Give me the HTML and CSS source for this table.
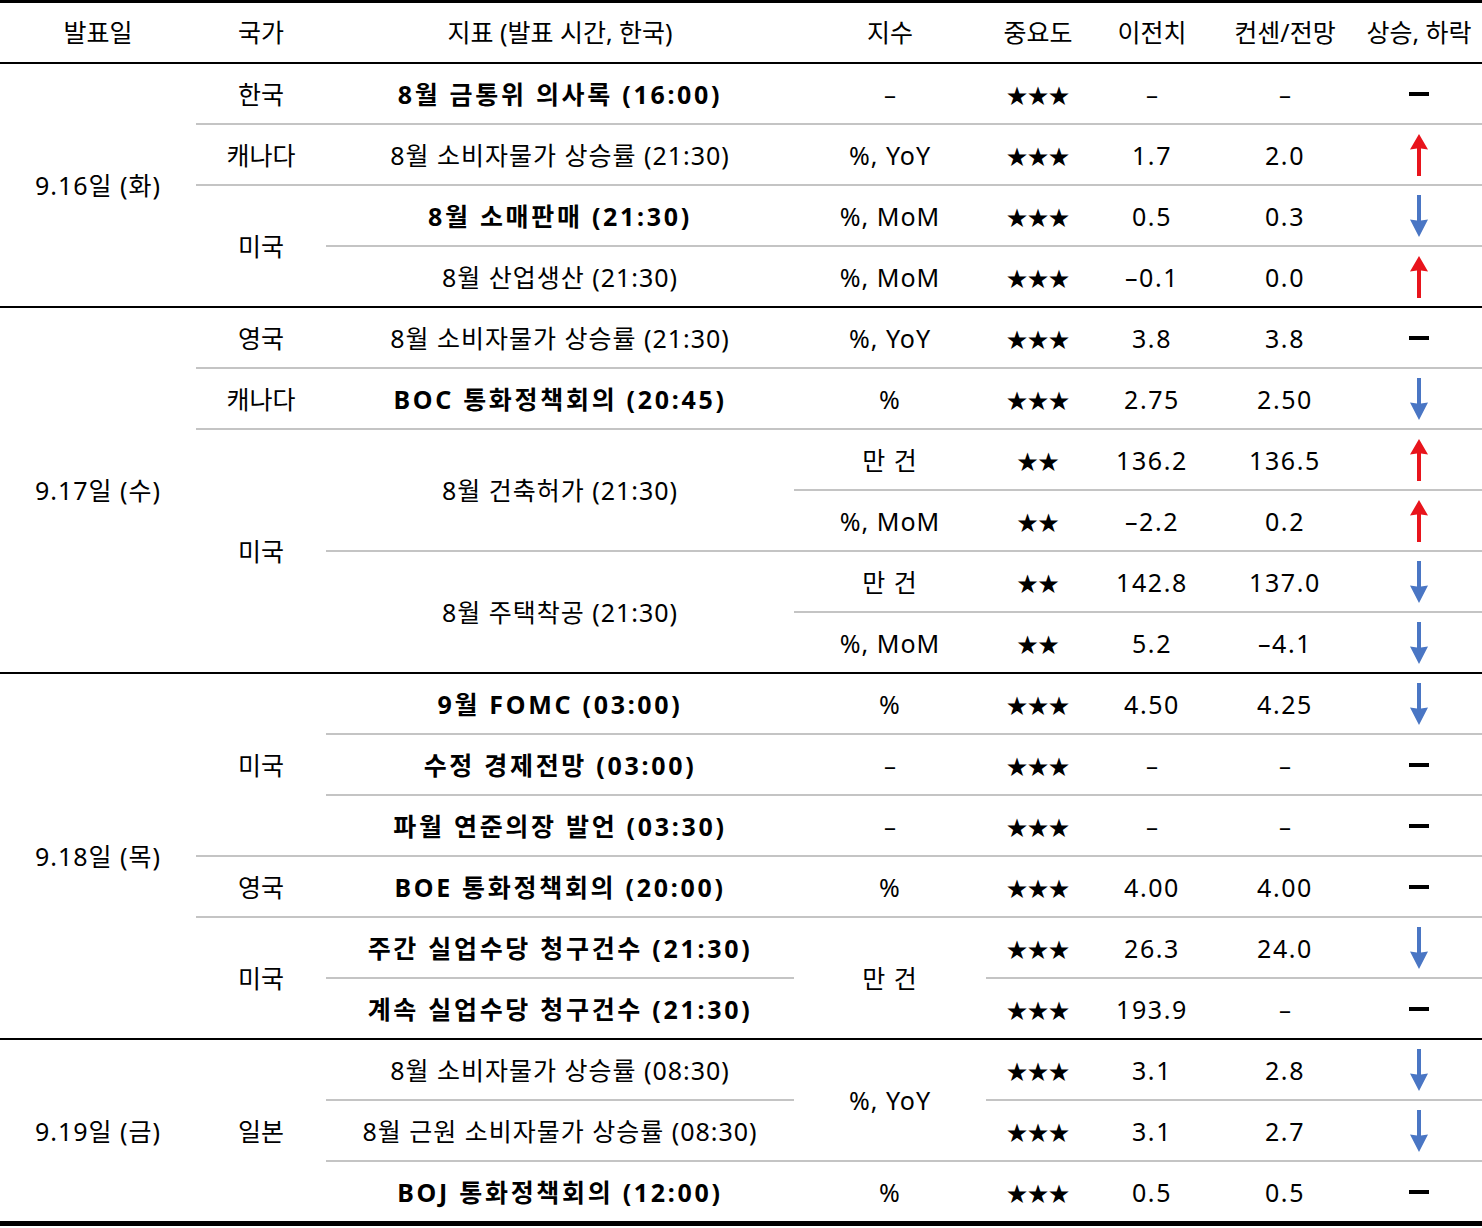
FILE: index.html
```html
<!DOCTYPE html>
<html lang="ko">
<head>
<meta charset="utf-8">
<title>주요 경제지표 일정</title>
<link rel="stylesheet" href="styles.css">
</head>
<body>
<svg class="defs" width="0" height="0" aria-hidden="true">
  <defs>
    <symbol id="up" viewBox="0 0 20 44">
      <path d="M10 1 L19 16.5 L12 15.5 L12 43 L8 43 L8 15.5 L1 16.5 Z" fill="#e8141c"/>
    </symbol>
    <symbol id="down" viewBox="0 0 20 44">
      <path d="M8 1 L12 1 L12 26.5 L19 25.5 L10 43 L1 25.5 L8 26.5 Z" fill="#4a76c4"/>
    </symbol>
  </defs>
</svg>
<div class="table">
  <div class="th">발표일</div>
  <div class="th">국가</div>
  <div class="th">지표 (발표 시간, 한국)</div>
  <div class="th">지수</div>
  <div class="th">중요도</div>
  <div class="th">이전치</div>
  <div class="th">컨센/전망</div>
  <div class="th">상승, 하락</div>

  <!-- 9.16 -->
  <div class="td date span4 end">9.16일 (화)</div>
  <div class="td c">한국</div>
  <div class="td b">8월 금통위 의사록 (16:00)</div>
  <div class="td na">–</div>
  <div class="td star">★★★</div>
  <div class="td na">–</div>
  <div class="td na">–</div>
  <div class="td"><span class="flat"></span></div>

  <div class="td c">캐나다</div>
  <div class="td">8월 소비자물가 상승률 (21:30)</div>
  <div class="td">%, YoY</div>
  <div class="td star">★★★</div>
  <div class="td n">1.7</div>
  <div class="td n">2.0</div>
  <div class="td"><svg class="arrow"><use href="#up"/></svg></div>

  <div class="td c span2 end">미국</div>
  <div class="td b">8월 소매판매 (21:30)</div>
  <div class="td">%, MoM</div>
  <div class="td star">★★★</div>
  <div class="td n">0.5</div>
  <div class="td n">0.3</div>
  <div class="td"><svg class="arrow"><use href="#down"/></svg></div>

  <div class="td end">8월 산업생산 (21:30)</div>
  <div class="td end">%, MoM</div>
  <div class="td star end">★★★</div>
  <div class="td n end">–0.1</div>
  <div class="td n end">0.0</div>
  <div class="td end"><svg class="arrow"><use href="#up"/></svg></div>

  <!-- 9.17 -->
  <div class="td date span6 end">9.17일 (수)</div>
  <div class="td c">영국</div>
  <div class="td">8월 소비자물가 상승률 (21:30)</div>
  <div class="td">%, YoY</div>
  <div class="td star">★★★</div>
  <div class="td n">3.8</div>
  <div class="td n">3.8</div>
  <div class="td"><span class="flat"></span></div>

  <div class="td c">캐나다</div>
  <div class="td b">BOC 통화정책회의 (20:45)</div>
  <div class="td">%</div>
  <div class="td star">★★★</div>
  <div class="td n">2.75</div>
  <div class="td n">2.50</div>
  <div class="td"><svg class="arrow"><use href="#down"/></svg></div>

  <div class="td c span4 end">미국</div>
  <div class="td span2">8월 건축허가 (21:30)</div>
  <div class="td">만 건</div>
  <div class="td star">★★</div>
  <div class="td n">136.2</div>
  <div class="td n">136.5</div>
  <div class="td"><svg class="arrow"><use href="#up"/></svg></div>

  <div class="td">%, MoM</div>
  <div class="td star">★★</div>
  <div class="td n">–2.2</div>
  <div class="td n">0.2</div>
  <div class="td"><svg class="arrow"><use href="#up"/></svg></div>

  <div class="td span2 end">8월 주택착공 (21:30)</div>
  <div class="td">만 건</div>
  <div class="td star">★★</div>
  <div class="td n">142.8</div>
  <div class="td n">137.0</div>
  <div class="td"><svg class="arrow"><use href="#down"/></svg></div>

  <div class="td end">%, MoM</div>
  <div class="td star end">★★</div>
  <div class="td n end">5.2</div>
  <div class="td n end">–4.1</div>
  <div class="td end"><svg class="arrow"><use href="#down"/></svg></div>

  <!-- 9.18 -->
  <div class="td date span6 end">9.18일 (목)</div>
  <div class="td c span3">미국</div>
  <div class="td b">9월 FOMC (03:00)</div>
  <div class="td">%</div>
  <div class="td star">★★★</div>
  <div class="td n">4.50</div>
  <div class="td n">4.25</div>
  <div class="td"><svg class="arrow"><use href="#down"/></svg></div>

  <div class="td b">수정 경제전망 (03:00)</div>
  <div class="td na">–</div>
  <div class="td star">★★★</div>
  <div class="td na">–</div>
  <div class="td na">–</div>
  <div class="td"><span class="flat"></span></div>

  <div class="td b">파월 연준의장 발언 (03:30)</div>
  <div class="td na">–</div>
  <div class="td star">★★★</div>
  <div class="td na">–</div>
  <div class="td na">–</div>
  <div class="td"><span class="flat"></span></div>

  <div class="td c">영국</div>
  <div class="td b">BOE 통화정책회의 (20:00)</div>
  <div class="td">%</div>
  <div class="td star">★★★</div>
  <div class="td n">4.00</div>
  <div class="td n">4.00</div>
  <div class="td"><span class="flat"></span></div>

  <div class="td c span2 end">미국</div>
  <div class="td b">주간 실업수당 청구건수 (21:30)</div>
  <div class="td span2 end">만 건</div>
  <div class="td star">★★★</div>
  <div class="td n">26.3</div>
  <div class="td n">24.0</div>
  <div class="td"><svg class="arrow"><use href="#down"/></svg></div>

  <div class="td b end">계속 실업수당 청구건수 (21:30)</div>
  <div class="td star end">★★★</div>
  <div class="td n end">193.9</div>
  <div class="td na end">–</div>
  <div class="td end"><span class="flat"></span></div>

  <!-- 9.19 -->
  <div class="td date span3 last">9.19일 (금)</div>
  <div class="td c span3 last">일본</div>
  <div class="td">8월 소비자물가 상승률 (08:30)</div>
  <div class="td span2">%, YoY</div>
  <div class="td star">★★★</div>
  <div class="td n">3.1</div>
  <div class="td n">2.8</div>
  <div class="td"><svg class="arrow"><use href="#down"/></svg></div>

  <div class="td">8월 근원 소비자물가 상승률 (08:30)</div>
  <div class="td star">★★★</div>
  <div class="td n">3.1</div>
  <div class="td n">2.7</div>
  <div class="td"><svg class="arrow"><use href="#down"/></svg></div>

  <div class="td b last">BOJ 통화정책회의 (12:00)</div>
  <div class="td last">%</div>
  <div class="td star last">★★★</div>
  <div class="td n last">0.5</div>
  <div class="td n last">0.5</div>
  <div class="td last"><span class="flat"></span></div>
</div>
</body>
</html>
```

FILE: styles.css
```css
html, body {
  margin: 0;
  padding: 0;
  background: #ffffff;
}

body {
  font-family: "Noto Sans", "Noto Sans CJK KR", sans-serif;
  font-size: 25px;
  color: #000000;
}

.defs {
  position: absolute;
  width: 0;
  height: 0;
}

.table {
  display: grid;
  grid-template-columns: 196px 130px 468px 192px 104px 124px 142px 126px;
  grid-auto-rows: 61px;
  border-top: 3px solid #000000;
  border-bottom: 3px solid #000000;
  width: 1482px;
}

.th,
.td {
  box-sizing: border-box;
  display: flex;
  align-items: center;
  justify-content: center;
  white-space: nowrap;
  line-height: 1;
}

.th {
  border-bottom: 2px solid #000000;
}

.td {
  border-bottom: 2px solid #c4c4c4;
  letter-spacing: 1px;
  padding-top: 1px;
}

.td.c {
  letter-spacing: 0;
}

.td.n {
  letter-spacing: 1.6px;
}

.td.end,
.td.last {
  border-bottom-color: #000000;
}

.span2 { grid-row: span 2; }
.span3 { grid-row: span 3; }
.span4 { grid-row: span 4; }
.span6 { grid-row: span 6; }

.td.b {
  font-weight: 700;
  letter-spacing: 2.7px;
}

.td.star {
  font-family: "Noto Sans CJK KR", sans-serif;
  font-size: 21px;
  letter-spacing: 0;
}

.td.na {
  font-size: 24px;
  letter-spacing: 0;
}

.flat {
  display: block;
  width: 20px;
  height: 4px;
  background: #000000;
}

.arrow {
  width: 20px;
  height: 44px;
}
```
